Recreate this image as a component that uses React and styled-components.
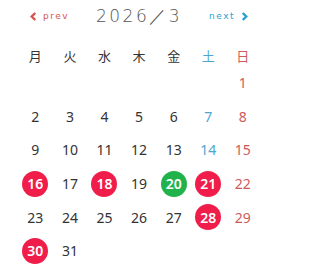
import React from "react";
import styled, { createGlobalStyle } from "styled-components";

const GlobalStyle = createGlobalStyle`
  html, body {
    margin: 0;
    padding: 0;
    background: #fff;
  }
  body {
    font-family: "Noto Sans CJK JP", "Noto Sans", sans-serif;
    color: #333;
  }
`;

const weekdays = ["月", "火", "水", "木", "金", "土", "日"];

// March 2026 starts on a Sunday
const marks = { 16: "red", 18: "red", 20: "green", 21: "red", 28: "red", 30: "red" };

const buildCells = () => {
  const cells = [];
  for (let i = 0; i < 6; i++) cells.push(null);
  for (let d = 1; d <= 31; d++) cells.push(d);
  return cells;
};

const App = () => {
  const cells = buildCells();

  return (
    <Wrapper>
      <GlobalStyle />
      <Header>
        <NavLink $kind="prev">
          <Chevron viewBox="0 0 8 10" $color="#d9534f">
            <path d="M6 1 L2 5 L6 9" />
          </Chevron>
          prev
        </NavLink>
        <Title>2026／3</Title>
        <NavLink $kind="next">
          next
          <Chevron viewBox="0 0 8 10" $color="#2a9fd6">
            <path d="M2 1 L6 5 L2 9" />
          </Chevron>
        </NavLink>
      </Header>

      <Grid>
        {weekdays.map((w, i) => (
          <Weekday key={w} $col={i}>
            {w}
          </Weekday>
        ))}
      </Grid>

      <Days>
        {cells.map((d, idx) => {
          const col = idx % 7;
          return (
            <Cell key={idx}>
              {d && (
                <Day $col={col} $mark={marks[d]}>
                  {d}
                </Day>
              )}
            </Cell>
          );
        })}
      </Days>
    </Wrapper>
  );
};

const colColor = (col) => {
  if (col === 5) return "#4ea6cf";
  if (col === 6) return "#cf5a5a";
  return "#333";
};

const Wrapper = styled.div`
  width: 320px;
  height: 270px;
  padding-left: 18px;
  box-sizing: border-box;
  overflow: hidden;
`;

const Header = styled.div`
  display: flex;
  align-items: center;
  width: 242px;
  height: 32px;
`;

const NavLink = styled.a`
  display: flex;
  align-items: center;
  gap: 6px;
  font-family: "DejaVu Sans", sans-serif;
  font-size: 9px;
  letter-spacing: 1.5px;
  color: ${({ $kind }) => ($kind === "prev" ? "#d9534f" : "#2a9fd6")};
  width: 60px;
  padding-left: ${({ $kind }) => ($kind === "prev" ? "12px" : "0")};
  padding-right: ${({ $kind }) => ($kind === "next" ? "12px" : "0")};
  justify-content: ${({ $kind }) => ($kind === "prev" ? "flex-start" : "flex-end")};
  box-sizing: border-box;
  cursor: pointer;
`;

const Chevron = styled.svg`
  width: 7px;
  height: 9px;
  fill: none;
  stroke: ${({ $color }) => $color};
  stroke-width: 2.8;
  stroke-linecap: butt;
  stroke-linejoin: miter;
`;

const Title = styled.div`
  flex: 1;
  text-align: center;
  font-family: "DejaVu Sans", sans-serif;
  font-weight: 200;
  font-size: 17px;
  letter-spacing: 2.5px;
  color: #555;
`;

const Grid = styled.div`
  display: grid;
  grid-template-columns: repeat(7, 34.6px);
  height: 46px;
  align-items: center;
`;

const Weekday = styled.div`
  text-align: center;
  font-size: 13px;
  color: ${({ $col }) => colColor($col)};
`;

const Days = styled.div`
  display: grid;
  grid-template-columns: repeat(7, 34.6px);
  grid-auto-rows: 33.6px;
  margin-top: -12px;
`;

const Cell = styled.div`
  display: flex;
  align-items: center;
  justify-content: center;
`;

const Day = styled.span`
  display: flex;
  align-items: center;
  justify-content: center;
  width: 26px;
  height: 26px;
  border-radius: 50%;
  font-family: "Noto Sans", sans-serif;
  font-size: 14px;
  font-weight: ${({ $mark }) => ($mark ? 600 : 400)};
  background: ${({ $mark }) =>
    $mark === "red" ? "#f01d4a" : $mark === "green" ? "#22b24c" : "transparent"};
  color: ${({ $mark, $col }) => ($mark ? "#fff" : colColor($col))};
`;

export default App;
